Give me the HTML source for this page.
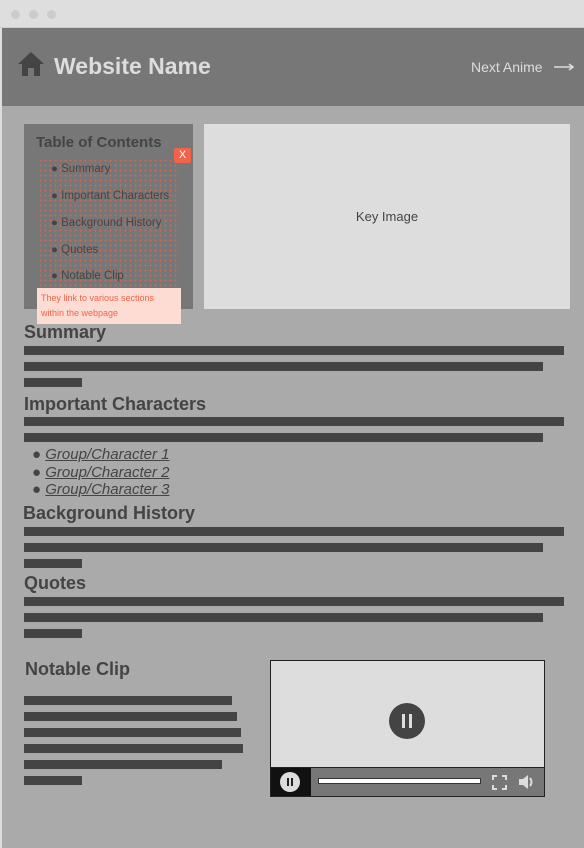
<!DOCTYPE html>
<html><head><style>
*{margin:0;padding:0;box-sizing:border-box}
body{width:584px;height:848px;background:#aaa;font-family:"Liberation Sans",sans-serif;position:relative;overflow:hidden}
.a{position:absolute}
.bar{position:absolute;background:#444;height:9px}
h2{position:absolute;font-size:18px;font-weight:bold;color:#444}
.toc{font-size:11.5px;color:#444}
</style></head><body>
<div class="a" style="left:0;top:0;width:2px;height:848px;background:#ddd"></div>
<div class="a" style="left:0;top:0;width:584px;height:28px;background:#dedede;border-bottom:1px solid #ccc"></div>
<div class="a" style="left:11px;top:10px;width:9px;height:9px;border-radius:50%;background:#ccc"></div>
<div class="a" style="left:29px;top:10px;width:9px;height:9px;border-radius:50%;background:#ccc"></div>
<div class="a" style="left:47px;top:10px;width:9px;height:9px;border-radius:50%;background:#ccc"></div>
<div class="a" style="left:2px;top:28px;width:582px;height:78px;background:#777"></div>
<svg class="a" style="left:17px;top:51px" width="28" height="25" viewBox="0 0 28 25"><path d="M14 1 L1 13 H5 V25 H11 V17 H17 V25 H23 V13 H27 Z" fill="#444"/></svg>
<div class="a" style="left:54px;top:53px;font-size:23px;font-weight:bold;color:#ddd">Website Name</div>
<div class="a" style="left:471px;top:59px;font-size:14px;color:#ddd">Next Anime</div>
<svg class="a" style="left:554px;top:62px" width="20" height="10"><path d="M0 5H19M15 2L19 5L15 8" stroke="#ddd" stroke-width="1.6" fill="none"/></svg>

<div class="a" style="left:24px;top:124px;width:169px;height:185px;background:#777"></div>
<div class="a" style="left:36px;top:134px;font-size:15px;font-weight:bold;color:#444">Table of Contents</div>
<div class="a" style="left:38px;top:158px;width:141px;height:130px;background-image:radial-gradient(#e5674f 0.8px,transparent 1px);background-size:5px 5px;opacity:.8"></div>
<div class="a" style="left:174px;top:148px;width:17px;height:15px;background:#f2634a;border-radius:2px;color:#fff;font-size:11px;text-align:center;line-height:15px">X</div>
<div class="a toc" style="left:51px;top:163px">● Summary</div>
<div class="a toc" style="left:51px;top:190px">● Important Characters</div>
<div class="a toc" style="left:51px;top:217px">● Background History</div>
<div class="a toc" style="left:51px;top:244px">● Quotes</div>
<div class="a toc" style="left:51px;top:270px">● Notable Clip</div>
<div class="a" style="left:37px;top:288px;width:144px;height:36px;background:#fddcd4;color:#f2634a;font-size:9px;line-height:15px;padding:3px 4px">They link to various sections within the webpage</div>

<div class="a" style="left:204px;top:124px;width:366px;height:185px;background:#ddd;font-size:13px;color:#444;text-align:center;line-height:185px">Key Image</div>

<h2 style="left:24px;top:322px">Summary</h2>
<div class="bar" style="left:24px;top:346px;width:540px"></div>
<div class="bar" style="left:24px;top:362px;width:519px"></div>
<div class="bar" style="left:24px;top:378px;width:58px"></div>
<h2 style="left:24px;top:394px">Important Characters</h2>
<div class="bar" style="left:24px;top:417px;width:540px"></div>
<div class="bar" style="left:24px;top:433px;width:519px"></div>
<div class="a" style="left:32px;top:446px;font-size:15px;color:#444;line-height:17.5px">● <i><u>Group/Character 1</u></i><br>● <i><u>Group/Character 2</u></i><br>● <i><u>Group/Character 3</u></i></div>
<h2 style="left:23px;top:503px">Background History</h2>
<div class="bar" style="left:24px;top:527px;width:540px"></div>
<div class="bar" style="left:24px;top:543px;width:519px"></div>
<div class="bar" style="left:24px;top:559px;width:58px"></div>
<h2 style="left:24px;top:573px">Quotes</h2>
<div class="bar" style="left:24px;top:597px;width:540px"></div>
<div class="bar" style="left:24px;top:613px;width:519px"></div>
<div class="bar" style="left:24px;top:629px;width:58px"></div>

<h2 style="left:25px;top:659px">Notable Clip</h2>
<div class="bar" style="left:24px;top:696px;width:208px"></div>
<div class="bar" style="left:24px;top:712px;width:213px"></div>
<div class="bar" style="left:24px;top:728px;width:217px"></div>
<div class="bar" style="left:24px;top:744px;width:219px"></div>
<div class="bar" style="left:24px;top:760px;width:198px"></div>
<div class="bar" style="left:24px;top:776px;width:58px"></div>

<div class="a" style="left:270px;top:660px;width:275px;height:137px;background:#ddd;border:1px solid #222"></div>
<div class="a" style="left:389px;top:703px;width:36px;height:36px;border-radius:50%;background:#444"></div>
<div class="a" style="left:402px;top:714px;width:3px;height:14px;background:#ddd"></div>
<div class="a" style="left:409px;top:714px;width:3px;height:14px;background:#ddd"></div>
<div class="a" style="left:270px;top:767px;width:275px;height:30px;background:#777;border:1px solid #222"></div>
<div class="a" style="left:271px;top:768px;width:40px;height:28px;background:#111"></div>
<div class="a" style="left:280px;top:772px;width:20px;height:20px;border-radius:50%;background:#ddd"></div>
<div class="a" style="left:287px;top:778px;width:2px;height:8px;background:#222"></div>
<div class="a" style="left:291px;top:778px;width:2px;height:8px;background:#222"></div>
<div class="a" style="left:318px;top:778px;width:163px;height:6px;background:#fff;border:1px solid #333"></div>
<svg class="a" style="left:492px;top:775px" width="15" height="15"><path d="M1 5V1H5M10 1H14V5M14 10V14H10M5 14H1V10" stroke="#ddd" stroke-width="2" fill="none"/></svg>
<svg class="a" style="left:518px;top:774px" width="18" height="16"><path d="M1 5H5L10 1V15L5 11H1Z" fill="#ddd"/><path d="M12 4Q15 8 12 12" stroke="#ddd" stroke-width="2" fill="none"/></svg>
</body></html>
